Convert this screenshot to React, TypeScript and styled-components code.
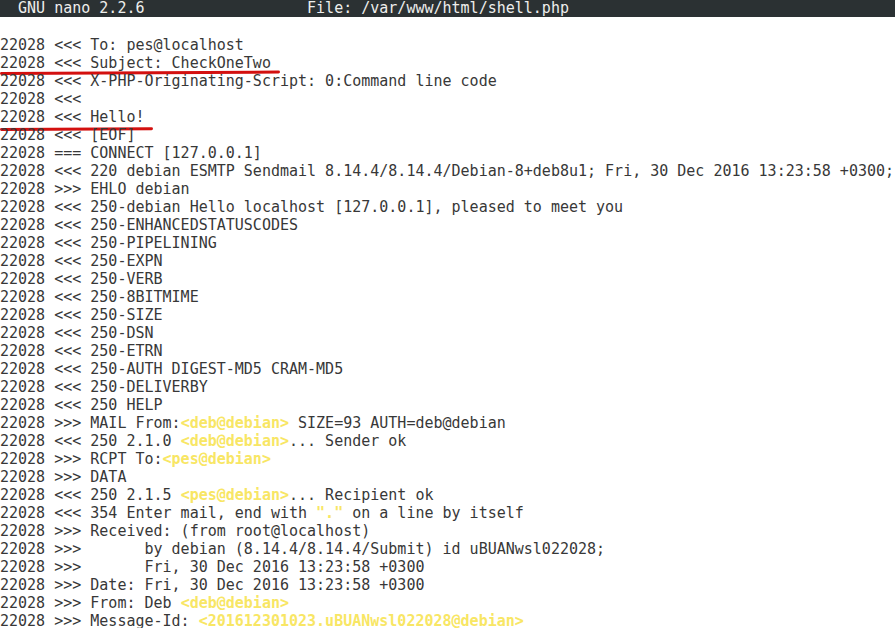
import React from 'react';
import styled, { createGlobalStyle } from 'styled-components';

const GlobalStyle = createGlobalStyle`
  html, body {
    margin: 0;
    padding: 0;
    background: #ffffff;
  }
`;

type Seg = string | { hl: string };

interface LineData {
  text: Seg[];
  mark?: { width: number; offset: number };
}

const L = (dir: string, ...text: Seg[]): LineData => ({ text: [`22028 ${dir} `, ...text] });
const hl = (s: string): Seg => ({ hl: s });

const lines: LineData[] = [
  L('<<<', 'To: pes@localhost'),
  { ...L('<<<', 'Subject: CheckOneTwo'), mark: { width: 280, offset: -3 } },
  L('<<<', 'X-PHP-Originating-Script: 0:Command line code'),
  L('<<<'),
  { ...L('<<<', 'Hello!'), mark: { width: 153, offset: -5 } },
  L('<<<', '[EOF]'),
  L('===', 'CONNECT [127.0.0.1]'),
  L('<<<', '220 debian ESMTP Sendmail 8.14.4/8.14.4/Debian-8+deb8u1; Fri, 30 Dec 2016 13:23:58 +0300;'),
  L('>>>', 'EHLO debian'),
  L('<<<', '250-debian Hello localhost [127.0.0.1], pleased to meet you'),
  L('<<<', '250-ENHANCEDSTATUSCODES'),
  L('<<<', '250-PIPELINING'),
  L('<<<', '250-EXPN'),
  L('<<<', '250-VERB'),
  L('<<<', '250-8BITMIME'),
  L('<<<', '250-SIZE'),
  L('<<<', '250-DSN'),
  L('<<<', '250-ETRN'),
  L('<<<', '250-AUTH DIGEST-MD5 CRAM-MD5'),
  L('<<<', '250-DELIVERBY'),
  L('<<<', '250 HELP'),
  L('>>>', 'MAIL From:', hl('<deb@debian>'), ' SIZE=93 AUTH=deb@debian'),
  L('<<<', '250 2.1.0 ', hl('<deb@debian>'), '... Sender ok'),
  L('>>>', 'RCPT To:', hl('<pes@debian>')),
  L('>>>', 'DATA'),
  L('<<<', '250 2.1.5 ', hl('<pes@debian>'), '... Recipient ok'),
  L('<<<', '354 Enter mail, end with ', hl('"."'), ' on a line by itself'),
  L('>>>', 'Received: (from root@localhost)'),
  L('>>>', '      by debian (8.14.4/8.14.4/Submit) id uBUANwsl022028;'),
  L('>>>', '      Fri, 30 Dec 2016 13:23:58 +0300'),
  L('>>>', 'Date: Fri, 30 Dec 2016 13:23:58 +0300'),
  L('>>>', 'From: Deb ', hl('<deb@debian>')),
  L('>>>', 'Message-Id: ', hl('<201612301023.uBUANwsl022028@debian>')),
];

const App = () => {
  return (
    <>
      <GlobalStyle />
      <Terminal>
        <TitleBar>
          {'  GNU nano 2.2.6                  File: /var/www/html/shell.php'}
        </TitleBar>
        <Blank />
        {lines.map((line, i) => (
          <Line key={i}>
            {line.text.map((seg, j) =>
              typeof seg === 'string' ? seg : <Highlight key={j}>{seg.hl}</Highlight>
            )}
            {line.mark && <Underline $width={line.mark.width} $offset={line.mark.offset} />}
          </Line>
        ))}
      </Terminal>
    </>
  );
};

export default App;

const Terminal = styled.div`
  width: 895px;
  height: 628px;
  overflow: hidden;
  background: #ffffff;
  color: #383838;
  font-family: 'DejaVu Sans Mono', 'Liberation Mono', monospace;
  font-size: 15px;
  line-height: 18px;
  display: flex;
  flex-direction: column;
`;

const TitleBar = styled.div`
  height: 17px;
  line-height: 17px;
  flex-shrink: 0;
  background: #2b3133;
  color: #eeeeec;
  white-space: pre;
  overflow: hidden;
`;

const Blank = styled.div`
  height: 19px;
  flex-shrink: 0;
`;

const Line = styled.div`
  position: relative;
  height: 18px;
  flex-shrink: 0;
  white-space: pre;
  overflow: visible;
`;

const Highlight = styled.span`
  color: #f8e664;
  font-weight: bold;
`;

const Underline = styled.div<{ $width: number; $offset: number }>`
  position: absolute;
  left: 0;
  bottom: ${(p) => p.$offset}px;
  width: ${(p) => p.$width}px;
  height: 3px;
  border-radius: 2px;
  background: #d3100f;
  transform: rotate(-0.3deg);
  transform-origin: left center;
`;
